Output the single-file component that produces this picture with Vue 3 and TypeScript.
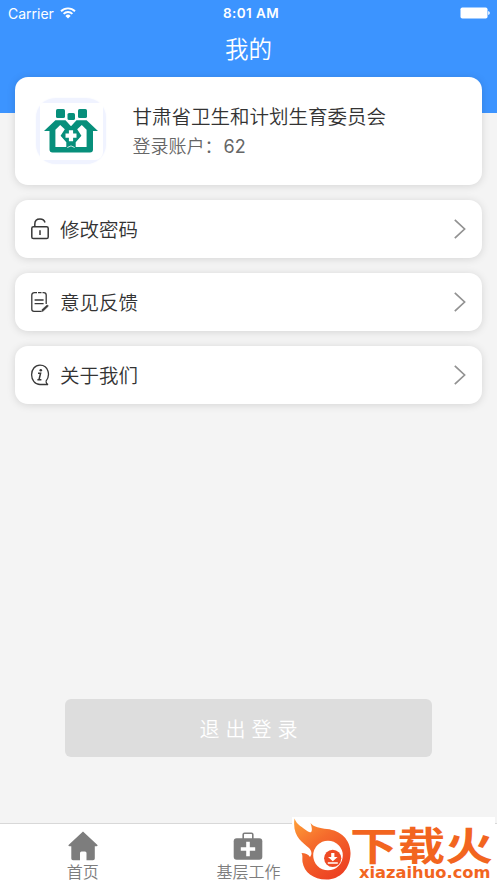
<script setup lang="ts">
interface MenuItem {
  id: 'lock' | 'note' | 'info'
  label: string
}

const items: MenuItem[] = [
  { id: 'lock', label: '修改密码' },
  { id: 'note', label: '意见反馈' },
  { id: 'info', label: '关于我们' },
]
</script>

<template>
  <div class="page">
    <header class="top">
      <div class="status">
        <div class="carrier">
          <span>Carrier</span>
          <svg class="wifi" viewBox="0 0 16 12">
            <path d="M1 4.2a10 10 0 0 1 14 0M3.6 6.9a6.2 6.2 0 0 1 8.800 0" fill="none" stroke="#fff" stroke-width="1.9" />
            <path d="M5.4 8.9a3.7 3.7 0 0 1 5.2 0L8 11.6z" fill="#fff" />
          </svg>
        </div>
        <span class="time">8:01 AM</span>
        <div class="battery-wrap">
          <svg class="battery" viewBox="0 0 30 12">
            <rect x="0.5" y="0.5" width="27" height="11" rx="1.8" fill="#fff" />
            <path d="M28.2 4q1.6.5 1.6 2t-1.6 2z" fill="#fff" />
          </svg>
        </div>
      </div>
      <h1 class="title">我的</h1>
    </header>

    <main class="content">
      <section class="card profile">
        <div class="avatar">
          <div class="avatar-face">
            <svg viewBox="0 0 54 44">
              <g fill="#078f7b">
                <rect x="12" y="0" width="9" height="9" rx="1.6" />
                <rect x="23.500" y="4" width="7.500" height="7" rx="1.600" />
                <rect x="34" y="0" width="9" height="9" rx="1.600" />
                <path d="M0 22 11.400 11.300H21.500l5.500 6 5.500-6h10.100L54 22H49v18.500q0 3-3 3H8.500q-3 0-3-3V22z" />
              </g>
              <path d="M11.400 20.800 16.200 16 20.800 20.200 16.600 26.700 22.300 33.200V38H11.400zM42.600 20.800 37.800 16 33.200 20.200 37.400 26.700 31.700 33.200V38H42.600z" fill="#fff" />
              <path d="M27 18.500 35.200 26.700 27 34.900 18.800 26.700z" fill="#078f7b" stroke="#078f7b" stroke-width="2.500" stroke-linejoin="round" />
              <path d="M27 21.200v11M21.500 26.700h11" fill="none" stroke="#fff" stroke-width="4.200" />
              <path d="M23.300 38.500 27 36.900l3.700 1.600" fill="none" stroke="#fff" stroke-width=".8" />
            </svg>
          </div>
        </div>
        <div class="info">
          <div class="org">甘肃省卫生和计划生育委员会</div>
          <div class="account">登录账户：<span class="num">62</span></div>
        </div>
      </section>

      <section v-for="item in items" :key="item.id" class="card row">
        <svg class="icon" viewBox="0 0 20 22" fill="none" stroke="#383838" stroke-width="1.5">
          <template v-if="item.id === 'lock'">
            <rect x="1.800" y="8.700" width="16.400" height="11.800" rx="1.600" />
            <path d="M4.800 8.500V6.200C4.800 3 7 1 10 1c2.500 0 4.400 1.200 5 3.500M10 12.300v4.800" />
          </template>
          <template v-else-if="item.id === 'note'">
            <path d="M1.800 15.500V4M16.200 4v9M4.500 1.600H7M8 1.600h3.500M12.500 1.600h1.200M1.800 4q0-2.400 2.700-2.400M13.700 1.600q2.500 0 2.500 2.400M1.800 15.500v2.800q0 2.100 2.200 2.100h7.500M4.600 9h9M4.600 12.600h9" stroke-width="1.300" />
            <path d="M11.800 20.600l.6-2.400 4.800-4.300 1.200 1.200-4.900 4.700z" fill="#383838" stroke-width=".6" />
          </template>
          <template v-else>
            <path d="M15.900 17.300C20.400 12 19 1.200 10 1.200 4.800 1.200 1.600 5.400 1.600 10.700S5 20.500 10 20.500h8q-1.700-.9-2.100-3.200" stroke-width="1.300" />
            <circle cx="10.800" cy="6.200" r="1.300" fill="#383838" stroke="none" />
            <path d="M8 9.300h2.600L9.100 15.300M7.400 15.700h4" stroke-width="1.500" />
          </template>
        </svg>
        <span class="label">{{ item.label }}</span>
        <svg class="chevron" viewBox="0 0 12 20">
          <path d="M.8.800 10.600 10 .8 19.200" fill="none" stroke="#929292" stroke-width="1.700" />
        </svg>
      </section>
      <button class="logout" type="button">退出登录</button>
    </main>

    <nav class="tabs">
      <div class="tab">
        <svg class="tab-icon" viewBox="0 0 30 30">
          <path d="M15 .6 29.200 13.700q1.100 1.500-.8 1.500H26.800V27.500q0 1.800-1.800 1.800H18.500V22q0-1.500-1.500-1.500h-3.500q-1.500 0-1.500 1.500v7.300H5q-1.700 0-1.700-1.800V15.200H1.600q-1.900 0-.8-1.500z" fill="#7d7d7d" />
        </svg>
        <span>首页</span>
      </div>
      <div class="tab">
        <svg class="tab-icon" viewBox="0 0 30 30">
          <path d="M10.200 8V3.500q0-1.300 1.300-1.300h7q1.300 0 1.300 1.300V8" fill="none" stroke="#7d7d7d" stroke-width="1.600" />
          <rect x=".7" y="7.300" width="28.600" height="21.500" rx="3" fill="#7d7d7d" />
          <path d="M15 10.800v14.400M7.800 18h14.400" fill="none" stroke="#fff" stroke-width="3.600" />
        </svg>
        <span>基层工作</span>
      </div>
      <div class="tab"></div>
    </nav>

    <div class="brand">
      <svg class="flame" viewBox="0 0 60 64">
        <defs>
          <linearGradient id="fire" x1="0" y1="0" x2=".65" y2="1">
            <stop offset="0" stop-color="#ffa038" />
            <stop offset=".45" stop-color="#f56b2c" />
            <stop offset="1" stop-color="#ed4223" />
          </linearGradient>
        </defs>
        <path d="M1.500.5C4 7 9 9 15 13.500c3 2 5.500.5 2.500-8.500C21 9.500 27 10 34 11 48 12.500 58 22 57.500 36 57 51 47 61.500 33.500 61.500 20 61.500 11 54 9.500 44c-.5-4 .5-6-1-9 3.500 0 7 1.500 8.500 4 2.500-3.500 1.500-6-1-9C9 24-1 18 1.500.5z" fill="url(#fire)" />
        <circle cx="35" cy="37.500" r="14.800" fill="#fff" />
        <circle cx="39.700" cy="40.300" r="8.600" fill="#ee4a25" />
        <path d="M38.200 35h3.200v4h3.200l-4.800 4.300-4.800-4.300h3.200zM34.800 44.200h10v1.500h-10z" fill="#fff" />
      </svg>
      <div class="brand-text">
        <div class="brand-name">下载火</div>
        <div class="brand-url">xiazaihuo.com</div>
      </div>
    </div>
  </div>
</template>

<style>
body {
  margin: 0;
}
</style>

<style scoped>
.page {
  position: relative;
  display: flex;
  flex-direction: column;
  width: 497px;
  height: 883px;
  overflow: hidden;
  background: #f4f4f4;
  font-family: Inter, 'Noto Sans CJK SC', sans-serif;
  color: #333;
}
.top {
  height: 113px;
  flex: none;
  background: #3c94ff;
  color: #fff;
}
.status {
  display: grid;
  grid-template-columns: 1fr auto 1fr;
  align-items: center;
  height: 26px;
  padding: 0 7px 0 8px;
  font-size: 14px;
}
.carrier {
  display: flex;
  align-items: center;
  gap: 6px;
}
.wifi {
  width: 16px;
  height: 12px;
}
.time {
  padding-left: 4px;
  font-size: 13.500px;
  font-weight: 600;
  letter-spacing: 0.4px;
}
.battery-wrap {
  display: flex;
  justify-content: flex-end;
}
.battery {
  width: 30px;
  height: 12px;
}
.title {
  margin: 0;
  padding-top: 4px;
  font: 350 23.500px/36px 'Noto Sans CJK SC', sans-serif;
  text-align: center;
}
.content {
  display: flex;
  flex: 1;
  flex-direction: column;
  gap: 14.500px;
  margin-top: -36px;
  padding: 0 15px;
}
.card {
  display: flex;
  align-items: center;
  border-radius: 13px;
  background: #fff;
  box-shadow: 0 1px 8px rgba(0, 0, 0, 0.13);
}
.profile {
  height: 108px;
}
.avatar {
  display: flex;
  align-items: center;
  justify-content: center;
  width: 70px;
  height: 66px;
  margin-left: 21px;
  border-radius: 20px;
  background: #f0f3ff;
  box-shadow: 0 0 2px #f3f5ff;
}
.avatar-face {
  display: flex;
  align-items: center;
  justify-content: center;
  width: 63px;
  height: 57px;
  border-radius: 3px 3px 8px 3px;
  background: #fff;
}
.avatar svg {
  width: 54px;
  height: 44px;
}
.info {
  margin-left: 26.500px;
}
.org {
  font: 350 19.500px/30px 'Noto Sans CJK SC', sans-serif;
}
.account {
  color: #666;
  font: 350 18px/29px 'Noto Sans CJK SC', sans-serif;
}
.num {
  margin-left: 1px;
  font: 400 18px/29px Inter, sans-serif;
}
.row {
  height: 58.600px;
}
.icon {
  width: 20px;
  height: 22px;
  margin-left: 15px;
}
.label {
  flex: 1;
  margin-left: 10px;
  font: 350 19.500px/30px 'Noto Sans CJK SC', sans-serif;
}
.chevron {
  width: 12px;
  height: 20px;
  margin-right: 16px;
}
.logout {
  width: 367px;
  height: 58px;
  margin: auto auto 66px;
  padding: 2px 0 0 6px;
  border: 0;
  border-radius: 6px;
  background: #ddd;
  color: #fff;
  font: 350 20px/56px 'Noto Sans CJK SC', sans-serif;
  letter-spacing: 6px;
}
.tabs {
  display: grid;
  grid-template-columns: repeat(3, 1fr);
  box-sizing: border-box;
  height: 60px;
  border-top: 1px solid #d8d8d8;
  background: #fff;
}
.tab {
  display: flex;
  flex-direction: column;
  align-items: center;
  padding-top: 7px;
  color: #7d7d7d;
  font: 350 16px/20px 'Noto Sans CJK SC', sans-serif;
}
.tab-icon {
  width: 30px;
  height: 30px;
}
.brand {
  position: absolute;
  right: 2px;
  bottom: 0;
  display: flex;
  width: 203px;
  height: 66px;
  background: #fff;
  color: #f2651f;
}
.flame {
  flex: none;
  width: 60px;
  height: 64px;
  margin: 1px 0 0 1px;
}
.brand-text {
  flex: 1;
}
.brand-name {
  width: 117px;
  height: 39px;
  margin: 9px 0 0 -3px;
  font: 700 39px/35px 'Noto Sans CJK SC', sans-serif;
  transform: scaleX(1.22);
  transform-origin: left;
}
.brand-url {
  padding-left: 6px;
  font: 700 16.300px/16px 'DejaVu Sans', sans-serif;
}
</style>
